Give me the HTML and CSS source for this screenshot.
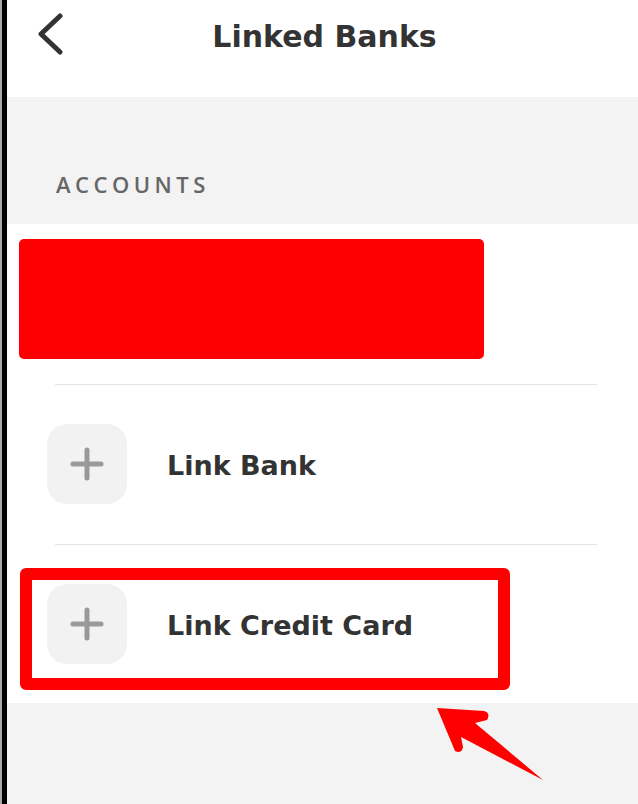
FILE: index.html
```html
<!DOCTYPE html>
<html>
    <head>
        <meta charset="utf-8">
        <title>Linked Banks</title>
        <link rel="stylesheet" href="styles.css">
    </head>
    <body>
        <div class="screen">
            <div class="header">
                <svg class="back" width="30" height="44" viewBox="0 0 30 44">
                    <path d="M24 5 L5 23 L24 41" fill="none" stroke="#333" stroke-width="5" stroke-linecap="round" stroke-linejoin="round"/>
                </svg>
                <h1>Linked Banks</h1>
            </div>

            <div class="section-label">ACCOUNTS</div>

            <div class="list">
                <div class="redacted"></div>

                <div class="divider"></div>

                <div class="row">
                    <div class="add-icon">
                        <svg width="34" height="34" viewBox="0 0 34 34">
                            <path d="M17 3 V31 M3 17 H31" stroke="#999" stroke-width="5" stroke-linecap="round"/>
                        </svg>
                    </div>
                    <span>Link Bank</span>
                </div>

                <div class="divider"></div>

                <div class="highlight">
                    <div class="row">
                        <div class="add-icon">
                            <svg width="34" height="34" viewBox="0 0 34 34">
                                <path d="M17 3 V31 M3 17 H31" stroke="#999" stroke-width="5" stroke-linecap="round"/>
                            </svg>
                        </div>
                        <span>Link Credit Card</span>
                    </div>
                </div>
            </div>

            <div class="footer"></div>

            <!-- annotation arrow pointing at the highlighted row -->
            <svg class="arrow" width="638" height="804" viewBox="0 0 638 804">
                <path d="M437 708 L484 711 Q491 713 487 720 L475 723 L543 780 L461 737 L463 747 Q462 754 455 751 Z" fill="#f00"/>
            </svg>
        </div>
    </body>
</html>
```

FILE: styles.css
```css
body{
    margin: 0;
    background: #a8a8a8;
    font-family: "DejaVu Sans", "Liberation Sans", sans-serif;
    color: #333333;
}

.screen{
    position: relative;
    margin-left: 2px;
    border-left: 5px solid #000000;
    background: #ffffff;
    min-height: 804px;
    display: flex;
    flex-direction: column;
    overflow: hidden;
}

.header{
    height: 97px;
    display: flex;
    align-items: center;
    justify-content: center;
    position: relative;
}

.header h1{
    margin: 0;
    font-size: 30px;
    font-weight: bold;
    color: #333333;
    padding-left: 4px;
    padding-bottom: 24px;
}

.back{
    position: absolute;
    left: 29px;
    top: 11px;
}

.section-label{
    background: #f3f3f3;
    height: 127px;
    box-sizing: border-box;
    padding: 72px 0 0 49px;
    font-family: "Open Sans", "Liberation Sans", sans-serif;
    font-size: 22px;
    font-weight: 600;
    letter-spacing: 4.5px;
    color: #666666;
}

.list{
    background: #ffffff;
    padding-top: 15px;
}

.redacted{
    margin-left: 12px;
    width: 465px;
    height: 120px;
    background: #ff0000;
    border-radius: 5px;
    margin-bottom: 25px;
}

.divider{
    height: 1px;
    background: #e4e4e4;
    margin: 0 41px 0 48px;
}

.row{
    display: flex;
    align-items: center;
    gap: 40px;
    padding: 39px 0 40px 40px;
    font-size: 27px;
    font-weight: bold;
    color: #333333;
}

.row span{
    padding-top: 3px;
}

.add-icon{
    width: 80px;
    height: 80px;
    border-radius: 20px;
    background: #f2f2f2;
    display: flex;
    align-items: center;
    justify-content: center;
}

.highlight{
    margin: 23px 0 13px 13px;
    width: 490px;
    box-sizing: border-box;
    border: 12px solid #ff0000;
    border-radius: 6px;
}

.highlight .row{
    padding: 4px 0 14px 15px;
}

.footer{
    flex: 1;
    background: #f3f3f3;
}

.arrow{
    position: absolute;
    left: -7px;
    top: 0;
}
```
